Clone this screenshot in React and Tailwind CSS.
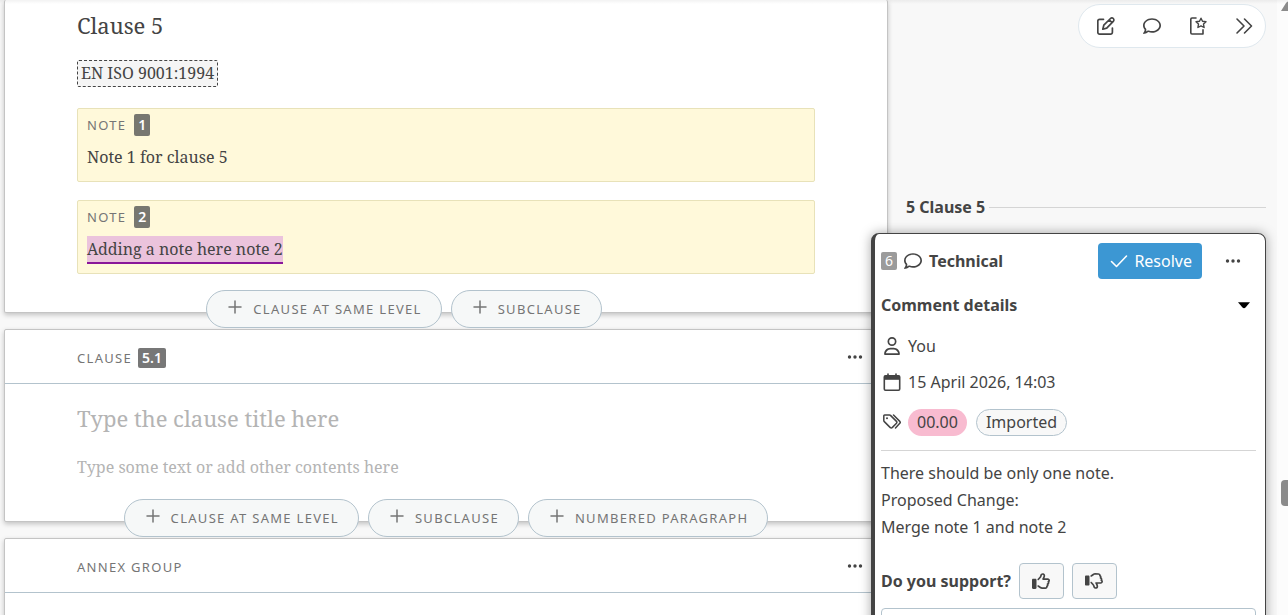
import { FaRegComment, FaRegThumbsDown, FaRegThumbsUp, FaRegUser } from 'react-icons/fa6';

function EditIcon() {
    return (
        <svg width="18" height="18" viewBox="0 0 18 18" fill="none" stroke="currentColor" strokeWidth="1.7" strokeLinecap="round" strokeLinejoin="round">
            <path d="M6.5 2.3H2.6A1.8 1.8 0 0 0 .8 4.1v11.2a1.8 1.8 0 0 0 1.8 1.8h11a1.8 1.8 0 0 0 1.8-1.8V11" />
            <path d="M5.8 12.2l1-4 6.7-6.7a1.9 1.9 0 0 1 2.8 2.8L9.7 11.1zM12.2 2.8l2.8 2.8" />
        </svg>
    );
}

function BookmarkPageIcon() {
    return (
        <svg width="18" height="18" viewBox="0 0 18 18" fill="none" stroke="currentColor" strokeWidth="1.6" strokeLinecap="round" strokeLinejoin="round">
            <path d="M7 1H3a1.2 1.2 0 0 0-1.2 1.2v13.6A1.2 1.2 0 0 0 3 17h11v-4.2" />
            <path strokeWidth="1.4" d="M12 1.2l1.5 3 3.5.5-2.500 2.400.6 3.400-3.100-1.600-3.100 1.600.6-3.400L7 4.700l3.500-.5z" />
        </svg>
    );
}

function ChevronsIcon() {
    return (
        <svg width="18" height="18" viewBox="0 0 18 18" fill="none" stroke="currentColor" strokeWidth="1.6" strokeLinecap="round" strokeLinejoin="round">
            <path d="M2 2l7 7-7 7M9.5 2l7 7-7 7" />
        </svg>
    );
}

function PlusIcon() {
    return (
        <svg width="14" height="14" viewBox="0 0 14 14" fill="none" stroke="currentColor" strokeWidth="1.5" strokeLinecap="round">
            <path d="M7 1v12M1 7h12" />
        </svg>
    );
}

function DotsIcon() {
    return (
        <svg width="16" height="16" viewBox="0 0 16 16" fill="currentColor">
            <circle cx="2.5" cy="8" r="1.7" />
            <circle cx="8" cy="8" r="1.7" />
            <circle cx="13.5" cy="8" r="1.7" />
        </svg>
    );
}

function CheckIcon() {
    return (
        <svg width="18" height="18" viewBox="0 0 18 18" fill="none" stroke="currentColor" strokeWidth="1.6" strokeLinecap="round" strokeLinejoin="round">
            <path d="M1.5 9.5l5 5L16.5 4" />
        </svg>
    );
}

function CalendarIcon() {
    return (
        <svg width="18" height="18" viewBox="0 0 18 18" fill="none" stroke="currentColor" strokeWidth="1.6" strokeLinecap="round">
            <rect x="1.300" y="2.800" width="15.400" height="14.400" rx="1.200" />
            <path d="M1.300 2.800h15.400v4H1.300z" fill="currentColor" stroke="none" />
            <path d="M5 1v3M13 1v3" />
        </svg>
    );
}

function TagsIcon() {
    return (
        <svg width="18" height="18" viewBox="0 0 18 18" fill="none" stroke="currentColor" strokeWidth="1.5" strokeLinecap="round" strokeLinejoin="round">
            <path d="M.8 2.800v4.700a1.500 1.500 0 0 0 .5 1.100l6 6a1.300 1.300 0 0 0 1.900 0l4.300-4.300a1.300 1.300 0 0 0 0-1.900l-6-6a1.500 1.500 0 0 0-1.100-.4H1.600a.8.8 0 0 0-.8.8z" />
            <path d="M10.500 2l6.300 6.400a1.400 1.400 0 0 1 0 1.900l-4.300 4.700" />
            <circle cx="4" cy="5.200" r="1" fill="currentColor" stroke="none" />
        </svg>
    );
}

function PillButton({ children }) {
    return (
        <button type="button" className="flex h-[38px] items-center gap-[11px] rounded-full border border-[#b3c3cd] bg-[#f6f8f8] pr-[19px] pl-[21px] text-[13px] tracking-widest text-[#757575]">
            <span className="pb-1"><PlusIcon /></span>
            {children}
        </button>
    );
}

function NumberBadge({ children }) {
    return <span className="rounded-xs bg-[#777770] px-1 text-sm leading-[22px] font-semibold tracking-normal text-white">{children}</span>;
}

function NoteBox({ number, children }) {
    return (
        <div className="h-[74px] rounded-xs border border-[#e8e2b9] bg-[#fff9da] px-[9px] pt-1">
            <div className="flex items-center gap-2 text-[13px] tracking-widest text-[#757575]">
                NOTE <NumberBadge>{number}</NumberBadge>
            </div>
            <p className="mt-1.5 font-['Noto_Serif','DejaVu_Serif',serif] text-base leading-7">{children}</p>
        </div>
    );
}

function CardHeader({ children }) {
    return (
        <header className="flex h-[54px] items-center justify-between border-b border-[#b3c3cd] pr-6 pl-[72px]">
            <h3 className="flex items-center gap-1.5 pt-0.5 text-[13px] tracking-widest text-[#757575]">{children}</h3>
            <button type="button" aria-label="More actions"><DotsIcon /></button>
        </header>
    );
}

const card = 'rounded-xs border border-[#c4c4c4] bg-white shadow-[0_2px_5px_rgba(0,0,0,0.22)]';

function Document() {
    return (
        <main className="flex min-w-0 flex-1 flex-col gap-4 pl-1">
            <section className={card + ' border-t-0'}>
                <div className="px-[72px]">
                    <h2 className="pt-2 font-['Noto_Serif','DejaVu_Serif',serif] text-[22px] leading-[34px]">Clause 5</h2>
                    <a href="#reference" className="mt-[18px] inline-block rounded-xs border border-dashed border-[#444] bg-[#f5f5f5] px-[3px] font-['Noto_Serif','DejaVu_Serif',serif] text-base leading-[25px]">EN ISO 9001:1994</a>
                    <div className="mt-[21px] flex flex-col gap-[18px]">
                        <NoteBox number="1">Note 1 for clause 5</NoteBox>
                        <NoteBox number="2">
                            <mark className="inline-block border-b-2 border-[#8a179a] bg-[#ebc3dc] leading-[26px] text-[#444]">Adding a note here note 2</mark>
                        </NoteBox>
                    </div>
                </div>
                <div className="relative mt-4 -mb-4 flex justify-center gap-[9px] pr-[84px]">
                    <PillButton>CLAUSE AT SAME LEVEL</PillButton>
                    <PillButton>SUBCLAUSE</PillButton>
                </div>
            </section>

            <section className={card}>
                <CardHeader>
                    CLAUSE <span className="rounded-xs bg-[#777] px-1 text-sm leading-5 font-semibold tracking-normal text-white">5.1</span>
                </CardHeader>
                <div className="flex flex-col px-[72px] pt-[17px] font-['Noto_Serif','DejaVu_Serif',serif]">
                    <input aria-label="Clause title" placeholder="Type the clause title here" className="h-[34px] text-[22px] placeholder:text-[#b4b4b4]" />
                    <input aria-label="Clause text" placeholder="Type some text or add other contents here" className="mt-5 h-6 text-base placeholder:text-[#b4b4b4]" />
                </div>
                <div className="relative mt-5 -mb-4 flex justify-center gap-[9px]">
                    <PillButton>CLAUSE AT SAME LEVEL</PillButton>
                    <PillButton>SUBCLAUSE</PillButton>
                    <PillButton>NUMBERED PARAGRAPH</PillButton>
                </div>
            </section>

            <section className={card + ' min-h-24'}>
                <CardHeader>ANNEX GROUP</CardHeader>
            </section>
        </main>
    );
}

function CommentCard() {
    return (
        <article className="relative -ml-[17px] min-h-[400px] rounded-lg border border-l-4 border-[#444] bg-white pr-[9px] pl-[6px] shadow-[0_0_12px_rgba(0,0,0,0.35)]">
            <div className="flex items-center pt-[9px]">
                <span className="rounded-xs bg-[#9b9b9b] px-1 text-sm leading-[18px] text-white">6</span>
                <FaRegComment className="ml-[7px] size-[18px]" />
                <h3 className="ml-[7px] font-bold">Technical</h3>
                <button type="button" className="ml-auto flex h-9 items-center gap-1.5 rounded-sm bg-[#3c97d3] pr-2.5 pl-3 text-white">
                    <CheckIcon /> Resolve
                </button>
                <button type="button" aria-label="Comment actions" className="mr-[15px] ml-[23px]"><DotsIcon /></button>
            </div>
            <button type="button" className="mt-3.5 flex w-full items-center justify-between pr-[5px] font-bold">
                Comment details
                <svg width="14" height="8" viewBox="0 0 14 8" fill="#000"><path d="M1 1.200h12L8.500 6.500q-1.500 1.300-3 0z" /></svg>
            </button>
            <ul>
                <li className="mt-[11px] flex h-9 items-center gap-[7px] pl-0.5"><FaRegUser className="size-[18px]" />You</li>
                <li className="flex h-9 items-center gap-[7px] pl-0.5"><CalendarIcon />15 April 2026, 14:03</li>
                <li className="flex h-[44px] items-center gap-[7px] pl-0.5">
                    <TagsIcon />
                    <span className="rounded-full bg-[#f8bbd0] px-[9px] leading-[27px]">00.00</span>
                    <span className="ml-0.5 rounded-full border border-[#b3c3cd] bg-[#f8f8f8] px-[9px] leading-[25px]">Imported</span>
                </li>
            </ul>
            <div className="mt-1.5 border-t border-[#d5d5d5] pt-[9px] leading-[27px]">
                <p>There should be only one note.</p>
                <p>Proposed Change:</p>
                <p>Merge note 1 and note 2</p>
            </div>
            <div className="mt-[22px] flex items-center gap-2">
                <span className="font-bold">Do you support?</span>
                <button type="button" aria-label="Support" className="flex h-9 w-[45px] items-center justify-center rounded-sm border border-[#b3c3cd] bg-[#f8f8f8]"><FaRegThumbsUp className="size-[18px]" /></button>
                <button type="button" aria-label="Do not support" className="flex h-9 w-[45px] items-center justify-center rounded-sm border border-[#b3c3cd] bg-[#f8f8f8]"><FaRegThumbsDown className="size-[18px]" /></button>
            </div>
            <textarea aria-label="Reply" className="mt-[9px] h-20 w-full resize-none rounded-sm border border-[#b3c3cd]" />
        </article>
    );
}

export default function App() {
    return (
        <div className="relative flex h-screen overflow-hidden bg-[#f8f8f8] font-['Noto_Sans',sans-serif] text-base leading-6 text-[#444]">
            <Document />

            <aside className="w-[378px] shrink-0">
                <nav className="mt-1 ml-auto flex h-11 w-[188px] items-center justify-between rounded-full border border-[#dfe8ee] bg-white pr-3 pl-[18px]">
                    <button type="button" aria-label="Edit"><EditIcon /></button>
                    <button type="button" aria-label="Comments"><FaRegComment className="size-[18px]" /></button>
                    <button type="button" aria-label="Bookmarks"><BookmarkPageIcon /></button>
                    <button type="button" aria-label="Collapse"><ChevronsIcon /></button>
                </nav>
                <h2 className="mt-[147px] mb-3.5 ml-[18px] flex items-center gap-1 font-bold after:h-px after:flex-1 after:bg-[#d5d5d5]">5 Clause 5</h2>
                <CommentCard />
            </aside>

            <div className="ml-[11px] flex w-[11px] shrink-0 flex-col items-end overflow-hidden bg-[#fcfcfc]">
                <svg width="7" height="12" viewBox="0 0 7 12" fill="#8b8b8b"><path d="M0 11L5 3q1-1.500 2-1.500V11z" /></svg>
                <div className="mt-[468px] h-[26px] w-[7px] rounded-l-sm bg-[#8b8b8b]" />
            </div>

            <div className="pointer-events-none absolute inset-x-0 top-0 h-1 bg-linear-to-b from-black/5 to-transparent" />
        </div>
    );
}
